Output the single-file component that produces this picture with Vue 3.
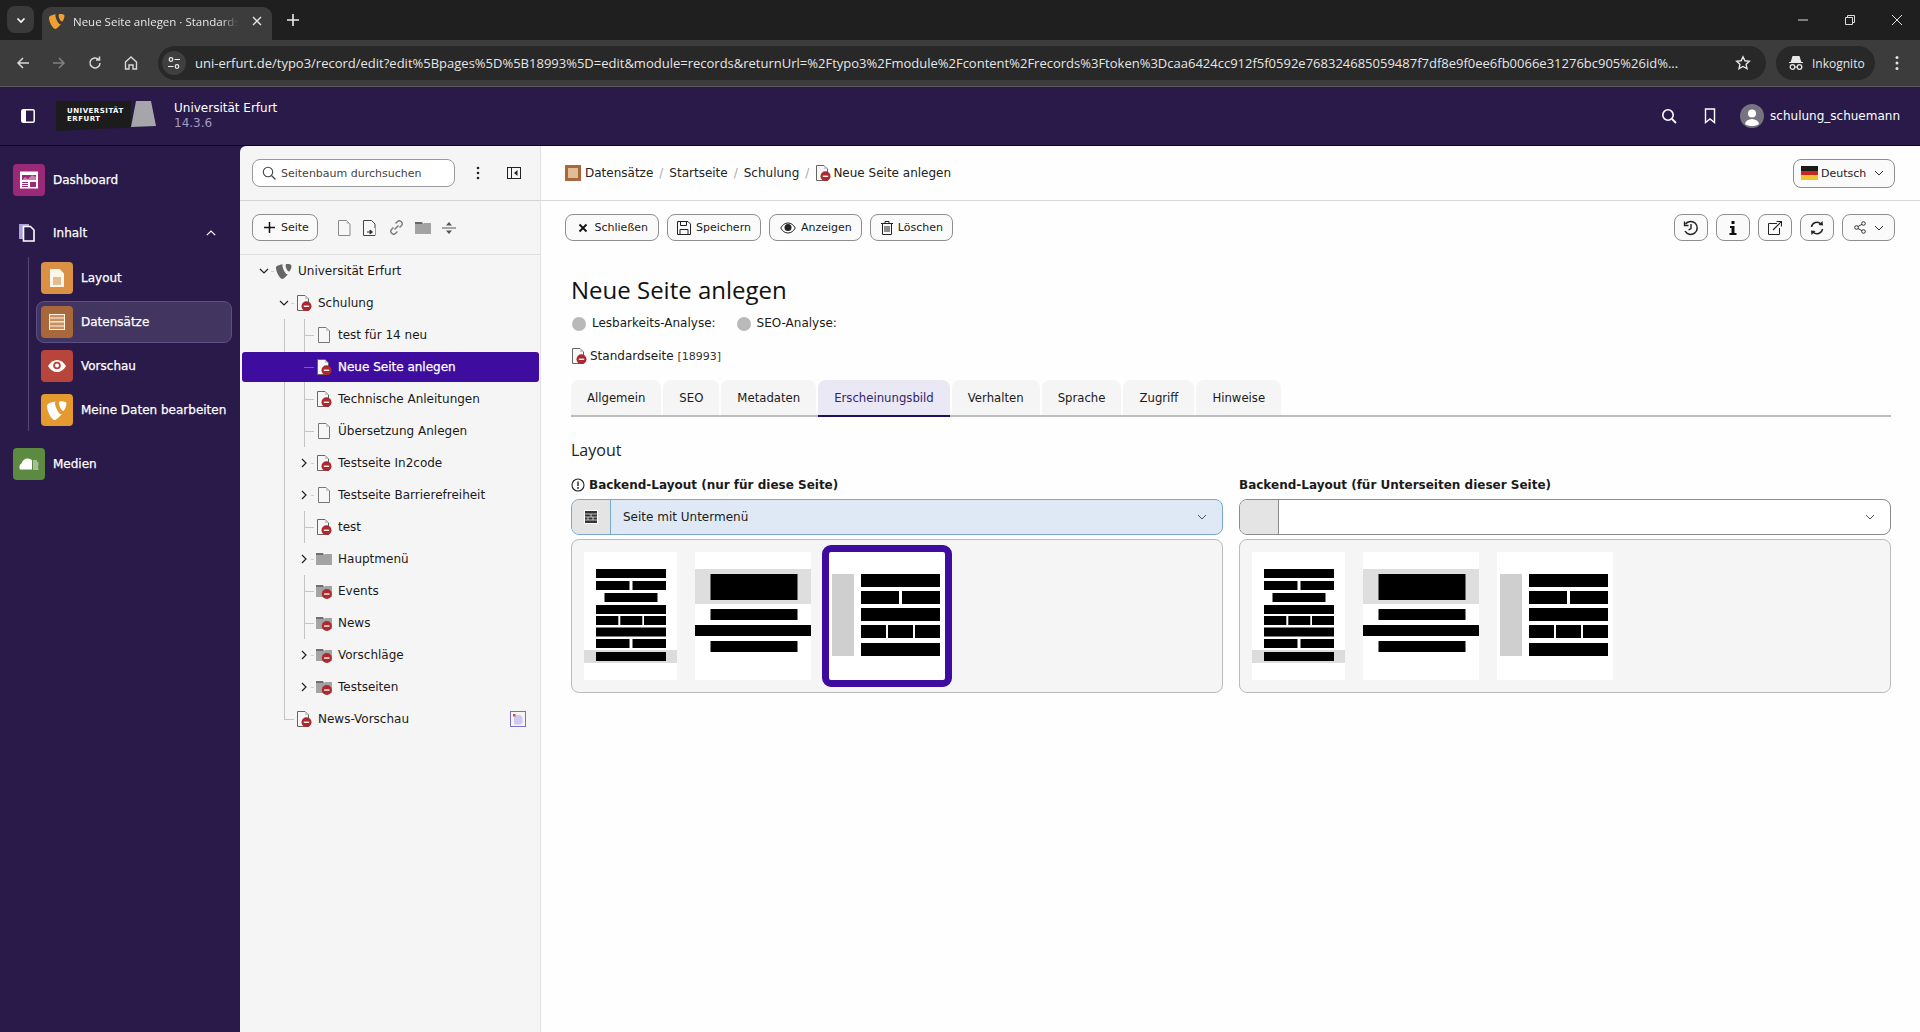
<script setup>
const url = 'uni-erfurt.de/typo3/record/edit?edit%5Bpages%5D%5B18993%5D=edit&module=records&returnUrl=%2Ftypo3%2Fmodule%2Fcontent%2Frecords%3Ftoken%3Dcaa6424cc912f5f0592e768324685059487f7df8e9f0ee6fb0066e31276bc905%26id%...'

const tree = [
  { label: 'Universität Erfurt', level: 0, icon: 'i-typo3', chev: 'down' },
  { label: 'Schulung', level: 1, icon: 'i-page-off', chev: 'down' },
  { label: 'test für 14 neu', level: 2, icon: 'i-page', link: true },
  { label: 'Neue Seite anlegen', level: 2, icon: 'i-page-off', link: true, selected: true },
  { label: 'Technische Anleitungen', level: 2, icon: 'i-page-off', link: true },
  { label: 'Übersetzung Anlegen', level: 2, icon: 'i-page', link: true },
  { label: 'Testseite In2code', level: 2, icon: 'i-page-off', chev: 'right' },
  { label: 'Testseite Barrierefreiheit', level: 2, icon: 'i-page', chev: 'right' },
  { label: 'test', level: 2, icon: 'i-page-off', link: true },
  { label: 'Hauptmenü', level: 2, icon: 'i-folder', chev: 'right' },
  { label: 'Events', level: 2, icon: 'i-folder-off', link: true },
  { label: 'News', level: 2, icon: 'i-folder-off', link: true },
  { label: 'Vorschläge', level: 2, icon: 'i-folder-off', chev: 'right' },
  { label: 'Testseiten', level: 2, icon: 'i-folder-off', chev: 'right' },
  { label: 'News-Vorschau', level: 1, icon: 'i-page-off', link: true, badge: true }
]

const thumbs = [
  {
    w: 93,
    fill: '#dcdcdc',
    grey: [[0, 98, 93, 13]],
    bars: [
      [12, 17, 70, 9], [12, 29, 33.5, 9], [48.5, 29, 33.5, 9], [20.5, 41, 53, 9], [12, 53, 70, 9],
      [12, 64, 22.3, 9], [36.3, 64, 22, 9], [60, 64, 22, 9], [12, 75.5, 70, 9],
      [12, 87, 33.5, 9], [48.5, 87, 33.5, 9], [12, 100, 70, 9]
    ]
  },
  {
    w: 116,
    fill: '#dedede',
    grey: [[0, 17, 116, 35]],
    bars: [[15.5, 22, 87, 26], [15.5, 57, 87, 11], [0, 73, 116, 11], [15.5, 89, 87, 11]]
  },
  {
    w: 116,
    fill: '#cfcfcf',
    grey: [[3, 22, 22, 82]],
    bars: [
      [32, 22, 79, 13], [32, 39, 38, 13], [73, 39, 38, 13], [32, 56, 79, 13],
      [32, 73, 25, 13], [59, 73, 25, 13], [86, 73, 25, 13], [32, 91, 79, 13]
    ]
  }
]

const columns = [
  { label: 'Backend-Layout (nur für diese Seite)', info: true, value: 'Seite mit Untermenü', active: true, selected: 2 },
  { label: 'Backend-Layout (für Unterseiten dieser Seite)', info: false, value: '', active: false, selected: -1 }
]

const tabs = ['Allgemein', 'SEO', 'Metadaten', 'Erscheinungsbild', 'Verhalten', 'Sprache', 'Zugriff', 'Hinweise']
</script>

<template>
  <div class="app">
    <svg class="sprite" aria-hidden="true">
      <symbol id="i-typo3" viewBox="0 0 16 16"><path fill="currentColor" d="M11.9 11.2c-.2.1-.5.1-.7.1-2 0-4.8-6.6-4.8-8.8 0-.8.2-1.1.5-1.3C4.5 1.5 1.2 2.4.2 3.7 0 4 0 4.500 0 5.100c0 3.400 3.600 10.900 6.200 10.900 1.200 0 3.200-2 5.700-4.800zM10.700 1c2.400 0 4.800.4 4.800 1.700 0 2.700-1.700 5.900-2.600 5.900-1.500 0-3.300-4-3.300-6C9.600 1.700 10 1 10.700 1z"/></symbol>
      <symbol id="i-page" viewBox="0 0 16 16"><path fill="#f7f7f7" stroke="#777" d="M2.500.5h7.500l3.500 3.500v11.500h-11z"/><path fill="#ccc" d="M10 .8 13.200 4H10z"/></symbol>
      <symbol id="i-page-off" viewBox="0 0 16 16"><path fill="#f7f7f7" stroke="#666" d="M1.500.5h7.500l3.500 3.500v11.500h-11z"/><path fill="#ccc" d="M9 .8 12.200 4H9z"/><circle cx="10.500" cy="11.200" r="5" fill="#a92a2f"/><rect x="7.800" y="10.600" width="5.400" height="1.300" fill="#fff"/></symbol>
      <symbol id="i-folder" viewBox="0 0 16 16"><path fill="#6f6f6f" d="M0 2h7l1 2H0z"/><path fill="#a3a3a3" d="M0 4h8l1-1h7v11H0z"/></symbol>
      <symbol id="i-folder-off" viewBox="0 0 16 16"><path fill="#6f6f6f" d="M0 2h7l1 2H0z"/><path fill="#a3a3a3" d="M0 4h8l1-1h7v11H0z"/><circle cx="10.800" cy="11" r="5" fill="#a92a2f"/><rect x="8.100" y="10.400" width="5.400" height="1.300" fill="#fff"/></symbol>
    </svg>

    <header class="tabstrip">
      <div class="tablist">
        <svg width="12" height="12" viewBox="0 0 12 12"><path d="M2.500 4.500 6 8l3.500-3.500" fill="none" stroke="#fff" stroke-width="1.600"/></svg>
      </div>
      <div class="tab">
        <svg class="tab-fav" width="16" height="16" style="color:#f0a030"><use href="#i-typo3" /></svg>
        <span class="tab-title">Neue Seite anlegen · Standardseite</span>
        <svg class="tab-close" width="10" height="10" viewBox="0 0 10 10"><path d="M1 1l8 8M9 1l-8 8" stroke="#e6e6e6" stroke-width="1.400"/></svg>
      </div>
      <svg class="tab-new" width="12" height="12" viewBox="0 0 12 12"><path d="M6 0v12M0 6h12" stroke="#ededed" stroke-width="1.600"/></svg>
      <div class="winctl">
        <svg width="12" height="12" viewBox="0 0 12 12"><path d="M1 6h10" stroke="#ddd"/></svg>
        <svg width="12" height="12" viewBox="0 0 12 12"><path d="M1.500 3.500h7v7h-7zM3.500 3.500v-2h7v7h-2" fill="none" stroke="#ddd"/></svg>
        <svg width="12" height="12" viewBox="0 0 12 12"><path d="M1 1l10 10M11 1 1 11" stroke="#ddd"/></svg>
      </div>
    </header>

    <div class="toolbar">
      <div class="nav">
        <svg width="16" height="16" viewBox="0 0 16 16"><path d="M14 8H3M8 3 3 8l5 5" fill="none" stroke="#d8d8d8" stroke-width="1.500"/></svg>
        <svg width="16" height="16" viewBox="0 0 16 16"><path d="M2 8h11M8 3l5 5-5 5" fill="none" stroke="#808080" stroke-width="1.500"/></svg>
        <svg width="16" height="16" viewBox="0 0 16 16"><path d="M13 8a5 5 0 1 1-1.500-3.600M12.500 1.500v3.500H9" fill="none" stroke="#d8d8d8" stroke-width="1.500"/></svg>
        <svg width="16" height="16" viewBox="0 0 16 16"><path d="M2.500 7 8 2l5.500 5v7h-3.500v-4H6v4H2.500z" fill="none" stroke="#d8d8d8" stroke-width="1.400"/></svg>
      </div>
      <div class="urlbar">
        <span class="siteinfo">
          <svg width="14" height="14" viewBox="0 0 14 14"><circle cx="4" cy="3.500" r="1.800" fill="none" stroke="#eee" stroke-width="1.200"/><path d="M7.500 3.500H13M1 10.500h5.500" stroke="#eee" stroke-width="1.200"/><circle cx="10" cy="10.500" r="1.800" fill="none" stroke="#eee" stroke-width="1.200"/></svg>
        </span>
        <span class="url">{{ url }}</span>
        <svg class="star" width="16" height="16" viewBox="0 0 16 16"><path d="m8 1.800 1.900 4 4.400.5-3.200 3 .9 4.400L8 11.500l-4 2.200.9-4.400-3.200-3 4.400-.5z" fill="none" stroke="#e6e6e6" stroke-width="1.400"/></svg>
      </div>
      <div class="incog">
        <svg width="16" height="16" viewBox="0 0 16 16"><path d="M3.500 6.500 5 1.500h6l1.500 5zM1 7.500h14" fill="#e6e6e6" stroke="#e6e6e6" stroke-width="1.200"/><circle cx="4.500" cy="12" r="2.300" fill="none" stroke="#e6e6e6" stroke-width="1.300"/><circle cx="11.500" cy="12" r="2.300" fill="none" stroke="#e6e6e6" stroke-width="1.300"/><path d="M6.800 12h2.400" stroke="#e6e6e6"/></svg>
        <span>Inkognito</span>
      </div>
      <svg class="kebab" width="4" height="16" viewBox="0 0 4 16"><circle cx="2" cy="2.500" r="1.500" fill="#e6e6e6"/><circle cx="2" cy="8" r="1.500" fill="#e6e6e6"/><circle cx="2" cy="13.500" r="1.500" fill="#e6e6e6"/></svg>
    </div>

    <div class="topbar">
      <svg class="toggle" width="14" height="14" viewBox="0 0 14 14"><rect x=".8" y=".8" width="12.400" height="12.400" rx="1.500" fill="none" stroke="#fff" stroke-width="1.500"/><rect x="1" y="1" width="4" height="12" fill="#fff"/></svg>
      <div class="logo">
        <div class="logo-mark"><span>UNIVERSITÄT</span><span>ERFURT</span></div>
        <svg class="logo-shape" width="25" height="26" viewBox="0 0 25 26"><path d="M5 0h15l5 25-25 1z" fill="#a5a5aa"/></svg>
      </div>
      <div class="site">
        <div class="site-name">Universität Erfurt</div>
        <div class="site-ver">14.3.6</div>
      </div>
      <div class="top-right">
        <svg width="16" height="16" viewBox="0 0 16 16"><circle cx="7" cy="7" r="5.200" fill="none" stroke="#fff" stroke-width="1.600"/><path d="m11 11 4 4" stroke="#fff" stroke-width="1.800"/></svg>
        <svg class="bookmark" width="12" height="16" viewBox="0 0 12 16"><path d="M1.500 1h9v13.500L6 11l-4.500 3.500z" fill="none" stroke="#fff" stroke-width="1.400"/></svg>
        <span class="avatar">
          <svg width="24" height="24" viewBox="0 0 24 24"><circle cx="12" cy="12" r="12" fill="#77737f"/><circle cx="12" cy="9.500" r="4" fill="#fff"/><path d="M5 20c1-4 4-4.500 7-5 3 .5 6 1 7 5-2 1.500-4.500 2-7 2s-5-.5-7-2z" fill="#fff"/></svg>
        </span>
        <span class="user">schulung_schuemann</span>
      </div>
    </div>

    <div class="main">
      <nav class="sidebar">
        <div class="mod top">
          <span class="mod-icon dash">
            <svg width="20" height="20" viewBox="0 0 20 20"><rect x="1" y="1.500" width="18" height="17" fill="#fff"/><rect x="3" y="5" width="14" height="5" fill="#9a2a78"/><path d="M3 10l3-3 3 2 4-4 4 2v3z" fill="#c77fb0"/><path d="M3 12.500h6M3 14.500h6M3 16.500h6" stroke="#9a2a78"/><rect x="11" y="12" width="6" height="5" fill="#9a2a78"/></svg>
          </span>
          <span class="mod-label">Dashboard</span>
        </div>
        <div class="group-head">
          <svg width="20" height="20" viewBox="0 0 20 20"><path d="M1 1h10v15H1z" fill="#a9a0e0"/><path d="M5.500 3.500h7l3.500 3.500v11H5.500z" fill="#291a4a" stroke="#fff" stroke-width="1.600"/></svg>
          <span class="mod-label">Inhalt</span>
          <svg class="group-chev" width="10" height="6" viewBox="0 0 10 6"><path d="M.8 5.200 5 1l4.200 4.200" fill="none" stroke="#fff" stroke-width="1.200"/></svg>
        </div>
        <div class="group">
          <div class="mod sub">
            <span class="mod-icon layout">
              <svg width="16" height="20" viewBox="0 0 16 20"><path d="M1 1h9.500L15 5.500V19H1z" fill="#fdf6ea"/><path d="M4 10h8M4 12h8M4 14h8M4 16h8" stroke="#c98434" stroke-width="1.100"/></svg>
            </span>
            <span class="mod-label">Layout</span>
          </div>
          <div class="mod sub active">
            <span class="mod-icon records">
              <svg width="16" height="16" viewBox="0 0 16 16"><rect x=".5" y=".5" width="15" height="15" fill="#c98f60" stroke="#fff3e3"/><path d="M0 4h16M0 7.900h16M0 12h16" stroke="#fff3e3" stroke-width="1.100"/></svg>
            </span>
            <span class="mod-label">Datensätze</span>
          </div>
          <div class="mod sub">
            <span class="mod-icon view">
              <svg width="20" height="14" viewBox="0 0 20 14"><path d="M1 7c2.500-4 5.500-6 9-6s6.500 2 9 6c-2.500 4-5.500 6-9 6S3.500 11 1 7z" fill="#fff"/><circle cx="10" cy="6.500" r="3.800" fill="#b8453c"/><circle cx="10" cy="6.500" r="2" fill="#fff"/></svg>
            </span>
            <span class="mod-label">Vorschau</span>
          </div>
          <div class="mod sub">
            <span class="mod-icon mine">
              <svg width="20" height="20" style="color:#fff"><use href="#i-typo3" /></svg>
            </span>
            <span class="mod-label">Meine Daten bearbeiten</span>
          </div>
        </div>
        <div class="mod media">
          <span class="mod-icon medien">
            <svg width="20" height="12" viewBox="0 0 20 12"><path d="M1 11.500c-1.200-2.500-.5-5 1.500-6C3.500 2 6 .5 8.500.5s4 1 4.500 2v9z" fill="#fff"/><path d="M14 3h4M14 5h5.500M14 7h5.500M14 9h5M14 11h5.500" stroke="#fff" stroke-width=".9"/></svg>
          </span>
          <span class="mod-label">Medien</span>
        </div>
      </nav>

      <aside class="treepane">
        <div class="tree-search">
          <div class="searchbox">
            <svg width="14" height="14" viewBox="0 0 14 14"><circle cx="6" cy="6" r="4.700" fill="none" stroke="#444" stroke-width="1.100"/><path d="m9.500 9.500 4 4" stroke="#444" stroke-width="1.200"/></svg>
            <span>Seitenbaum durchsuchen</span>
          </div>
          <svg class="tree-dots" width="4" height="14" viewBox="0 0 4 14"><circle cx="2" cy="2" r="1.300" fill="#222"/><circle cx="2" cy="7" r="1.300" fill="#222"/><circle cx="2" cy="12" r="1.300" fill="#222"/></svg>
          <svg class="tree-collapse" width="14" height="12" viewBox="0 0 14 12"><rect x=".5" y=".5" width="13" height="11" fill="none" stroke="#222"/><path d="M4.500 0v12" stroke="#222"/><path d="M10.500 3v6L7 6z" fill="#222"/></svg>
        </div>
        <div class="tree-tools">
          <button class="btn seite">
            <svg width="11" height="11" viewBox="0 0 11 11"><path d="M5.500 0v11M0 5.500h11" stroke="#111" stroke-width="1.500"/></svg>
            <span>Seite</span>
          </button>
          <div class="tool-icons">
            <svg width="14" height="16" viewBox="0 0 14 16"><path d="M1.500.5h8l3.500 3.500v11.500h-11.500z" fill="#f7f7f7" stroke="#8a8a8a"/><path d="M9.500.8 12.800 4H9.500z" fill="#ccc"/></svg>
            <svg width="16" height="16" viewBox="0 0 16 16"><path d="M1.500.5h8l3.500 3.500v11.500h-11.500z" fill="#f7f7f7" stroke="#444"/><rect x="7" y="8" width="6" height="7" fill="#f7f7f7"/><path d="M5 12h5M8 10l2.500 2L8 14z" fill="#333" stroke="#333"/></svg>
            <svg width="15" height="15" viewBox="0 0 15 15"><path d="M5.500 9.500l4-4M6.500 3.500l1.800-1.800a2.800 2.800 0 0 1 4 4L10.500 7.500M8.500 11.500l-1.800 1.800a2.800 2.800 0 0 1-4-4L4.500 7.500" fill="none" stroke="#7a7a7a" stroke-width="1.400"/></svg>
            <svg width="16" height="14" viewBox="0 0 16 14"><path d="M0 1h7l1 2H0z" fill="#666"/><path d="M0 3h8l1-1h7v11H0z" fill="#a3a3a3"/></svg>
            <svg width="14" height="12" viewBox="0 0 14 12"><path d="M0 6h14" stroke="#555"/><path d="M7 0l3 3.500H4zM7 12l3-3.500H4z" fill="#555"/></svg>
          </div>
        </div>
        <div class="tree">
          <span class="vline l0"></span>
          <span class="vline l1"></span>
          <span class="vline l2"></span>
          <div v-for="n in tree" :key="n.label" class="node" :class="['lv' + n.level, { sel: n.selected }]">
            <span v-if="n.link" class="hline"></span>
            <span v-if="n.chev" class="stub"></span>
            <span v-if="n.chev" class="chev">
              <svg v-if="n.chev === 'down'" width="10" height="8" viewBox="0 0 10 8"><path d="M1 2l4 4 4-4" fill="none" stroke="#222" stroke-width="1.200"/></svg>
              <svg v-else width="8" height="10" viewBox="0 0 8 10"><path d="M2 1l4 4-4 4" fill="none" stroke="#222" stroke-width="1.200"/></svg>
            </span>
            <svg class="node-icon" width="16" height="16" :class="{ grey: n.icon === 'i-typo3' }"><use :href="'#' + n.icon" /></svg>
            <span class="node-label">{{ n.label }}</span>
            <svg v-if="n.badge" class="node-badge" width="16" height="16" viewBox="0 0 16 16"><rect x=".5" y=".5" width="15" height="15" fill="#f5f5f5" stroke="#7a6fc4"/><path d="M4 4h6l2.500 2v6l-2 1.500H4z" fill="#cfc9ef"/><rect x="3" y="3" width="2.500" height="2.500" fill="#d9503f"/></svg>
          </div>
        </div>
      </aside>

      <section class="content">
        <div class="crumbs">
          <span class="crumb-ico"></span>
          <span>Datensätze</span><i>/</i>
          <span>Startseite</span><i>/</i>
          <span>Schulung</span><i>/</i>
          <svg width="16" height="16"><use href="#i-page-off" /></svg>
          <span class="crumb-last">Neue Seite anlegen</span>
          <button class="btn lang">
            <svg width="17" height="14" viewBox="0 0 17 14"><rect width="17" height="5" fill="#1a1a1a"/><rect y="5" width="17" height="4" fill="#c9281e"/><rect y="9" width="17" height="5" fill="#f1c232"/></svg>
            <span>Deutsch</span>
            <svg class="mini-chev" width="10" height="6" viewBox="0 0 10 6"><path d="M1 1l4 4 4-4" fill="none" stroke="#333"/></svg>
          </button>
        </div>

        <div class="docbar">
          <button class="btn">
            <svg width="14" height="14" viewBox="0 0 14 14"><path d="m3.500 3.500 7 7M10.500 3.500l-7 7" stroke="#111" stroke-width="1.800"/></svg>
            <span>Schließen</span>
          </button>
          <button class="btn">
            <svg width="14" height="14" viewBox="0 0 14 14"><path d="M.5.500h10.500l2.500 2.500v10.500H.500z" fill="none" stroke="#222"/><path d="M3.500.5v4h6v-4M3 13.500v-5h8v5" fill="none" stroke="#222"/></svg>
            <span>Speichern</span>
          </button>
          <button class="btn">
            <svg width="16" height="12" viewBox="0 0 16 12"><path d="M.7 6C2.500 2.800 5 1 8 1s5.500 1.800 7.300 5C13.500 9.200 11 11 8 11S2.500 9.200.7 6z" fill="#fff" stroke="#222"/><circle cx="8" cy="5.500" r="3.500" fill="#222"/></svg>
            <span>Anzeigen</span>
          </button>
          <button class="btn">
            <svg width="12" height="14" viewBox="0 0 12 14"><path d="M0 2.500h12M4 2.500V.5h4v2M1.500 2.500v11h9v-11M4 5v6M6 5v6M8 5v6" fill="none" stroke="#222"/></svg>
            <span>Löschen</span>
          </button>
          <div class="doc-right">
            <button class="btn square">
              <svg width="16" height="16" viewBox="0 0 16 16"><path d="M2.500 4A6.500 6.500 0 1 1 2 11" fill="none" stroke="#222" stroke-width="1.500"/><path d="M1.500 1.500V5.500H5.500" fill="none" stroke="#222" stroke-width="1.400"/><path d="M8 4v4.500l-2.500 1.500" fill="none" stroke="#222" stroke-width="1.400"/></svg>
            </button>
            <button class="btn square">
              <svg width="10" height="14" viewBox="0 0 10 14"><rect x="3.500" y="0" width="3" height="3" fill="#111"/><path d="M2 5h4.500v7H8.500v2h-7v-2h2V7H2z" fill="#111"/></svg>
            </button>
            <button class="btn square">
              <svg width="14" height="14" viewBox="0 0 14 14"><path d="M9 2.500H.5v11h11V7" fill="none" stroke="#222"/><path d="M5 9 13 1M8.500.5H13.500V5.500" fill="none" stroke="#222" stroke-width="1.200"/></svg>
            </button>
            <button class="btn square">
              <svg width="16" height="16" viewBox="0 0 16 16"><path d="M2.500 7a5.500 5.500 0 0 1 9.500-3M13.500 9a5.500 5.500 0 0 1-9.500 3" fill="none" stroke="#222" stroke-width="1.500"/><path d="m9.500 5 4.500.5-.500-4.500zM6.500 11 2 10.500l.5 4.500z" fill="#222"/></svg>
            </button>
            <button class="btn share">
              <svg width="12" height="13" viewBox="0 0 12 13"><circle cx="2.500" cy="6.500" r="1.800" fill="none" stroke="#333"/><circle cx="9.500" cy="2.500" r="1.800" fill="none" stroke="#333"/><circle cx="9.500" cy="10.500" r="1.800" fill="none" stroke="#333"/><path d="M4 5.500 8 3.300M4 7.500l4 2.200" stroke="#333"/></svg>
              <svg class="mini-chev" width="10" height="6" viewBox="0 0 10 6"><path d="M1 1l4 4 4-4" fill="none" stroke="#333"/></svg>
            </button>
          </div>
        </div>

        <div class="form">
          <h1>Neue Seite anlegen</h1>
          <div class="analysis">
            <span class="dot"></span><span class="an-label">Lesbarkeits-Analyse:</span>
            <span class="dot second"></span><span class="an-label">SEO-Analyse:</span>
          </div>
          <div class="rectype">
            <svg width="16" height="16"><use href="#i-page-off" /></svg>
            <span>Standardseite <small>[18993]</small></span>
          </div>

          <div class="tabs">
            <div v-for="t in tabs" :key="t" class="ftab" :class="{ on: t === 'Erscheinungsbild' }">{{ t }}</div>
          </div>

          <h2>Layout</h2>

          <div class="cols">
            <div v-for="c in columns" :key="c.label" class="col">
              <label class="flabel">
                <svg v-if="c.info" width="14" height="14" viewBox="0 0 14 14"><circle cx="7" cy="7" r="6" fill="none" stroke="#222" stroke-width="1.100"/><path d="M7 3.500v4.500" stroke="#222" stroke-width="1.400"/><circle cx="7" cy="10" r=".9" fill="#222"/></svg>
                <span>{{ c.label }}</span>
              </label>
              <div class="select" :class="{ changed: c.active }">
                <span class="addon">
                  <svg v-if="c.active" width="14" height="14" viewBox="0 0 14 14"><rect width="14" height="14" fill="#fff"/><rect x="1" y="1" width="12" height="12" fill="#333"/><path d="M1 4h12M1 7h12M1 10h12M7 4v3M4 7v3M9 7v3" stroke="#fff" stroke-width=".7"/></svg>
                </span>
                <span class="value">{{ c.value }}</span>
                <svg class="sel-chev" width="10" height="6" viewBox="0 0 10 6"><path d="M1 1l4 4 4-4" fill="none" stroke="#555"/></svg>
              </div>
              <div class="picker">
                <div v-for="(t, i) in thumbs" :key="i" class="thumb" :class="{ picked: c.selected === i }">
                  <svg :width="t.w" height="128" :viewBox="'0 0 ' + t.w + ' 128'">
                    <rect v-for="(r, k) in t.grey" :key="k" :x="r[0]" :y="r[1]" :width="r[2]" :height="r[3]" :fill="t.fill" />
                    <rect v-for="(r, k) in t.bars" :key="'b' + k" :x="r[0]" :y="r[1]" :width="r[2]" :height="r[3]" fill="#000" />
                  </svg>
                </div>
              </div>
            </div>
          </div>
        </div>
      </section>
    </div>
  </div>
</template>

<style scoped>
.app { width: 1920px; height: 1032px; overflow: hidden; display: flex; flex-direction: column; font-family: "DejaVu Sans", sans-serif; font-size: 12px; color: #1a1a1a; background: #fff; }
.sprite { position: absolute; width: 0; height: 0; }
svg { display: block; flex: none; }
button { font: inherit; color: inherit; }

.tabstrip { height: 40px; background: #1f1f1f; display: flex; align-items: flex-end; font-family: "Open Sans", sans-serif; flex: none; }
.tablist { width: 27px; height: 27px; margin: 0 8px 7px 7px; border-radius: 8px; background: #3a3a3a; display: flex; align-items: center; justify-content: center; }
.tab { width: 230px; height: 33px; background: #3c3c3c; border-radius: 9px 9px 0 0; display: flex; align-items: center; padding: 0 10px 5px 7px; box-sizing: border-box; color: #e6e6e6; font-size: 11.500px; }
.tab-title { margin-left: 8px; width: 165px; overflow: hidden; white-space: nowrap; -webkit-mask-image: linear-gradient(90deg, #000 90%, transparent); mask-image: linear-gradient(90deg, #000 90%, transparent); }
.tab-close { margin-left: 14px; }
.tab-new { margin: 0 0 14px 15px; }
.winctl { margin-left: auto; display: flex; gap: 35px; padding: 0 17px 14px 0; }

.toolbar { height: 46px; box-sizing: content-box; background: #3c3c3c; border-bottom: 1px solid #5a5a5a; display: flex; align-items: center; font-family: "Open Sans", sans-serif; flex: none; }
.nav { width: 158px; display: flex; gap: 20px; padding-left: 15px; box-sizing: border-box; }
.urlbar { width: 1608px; height: 34px; background: #282828; border-radius: 17px; display: flex; align-items: center; color: #e6e6e6; }
.siteinfo { width: 24px; height: 24px; margin-left: 4px; border-radius: 50%; background: #3f3f3f; display: flex; align-items: center; justify-content: center; flex: none; }
.url { margin-left: 9px; width: 1530px; font-size: 13px; white-space: nowrap; overflow: hidden; flex: none; }
.star { margin-left: 10px; }
.incog { margin-left: 10px; width: 99px; height: 34px; background: #282828; border-radius: 17px; display: flex; align-items: center; gap: 8px; padding-left: 12px; box-sizing: border-box; color: #e6e6e6; font-size: 12px; }
.kebab { margin-left: 20px; }

.topbar { height: 58px; background: #291a4a; border-bottom: 1px solid #0d0820; display: flex; align-items: center; color: #fff; flex: none; }
.toggle { margin-left: 21px; }
.logo { margin-left: 21px; width: 100px; height: 30px; display: flex; align-items: flex-start; }
.logo-mark { width: 76px; height: 30px; background: #1c1c1c; display: flex; flex-direction: column; justify-content: center; padding-left: 11px; box-sizing: border-box; font-size: 7px; font-weight: 700; line-height: 8px; padding-bottom: 3px; clip-path: polygon(0 0, 100% 0, 100% 88%, 0 100%); letter-spacing: .5px; }
.site { margin-left: 18px; line-height: 15px; }
.site-ver { color: #a29cc0; }
.top-right { margin-left: auto; display: flex; align-items: center; padding-right: 20px; }
.bookmark { margin-left: 27px; }
.avatar { margin-left: 24px; }
.user { margin-left: 6px; }

.main { flex: 1; display: flex; min-height: 0; background: #291a4a; }
.sidebar { width: 240px; flex: none; color: #fff; display: flex; flex-direction: column; padding: 18px 8px 0 13px; box-sizing: border-box; }
.mod { display: flex; align-items: center; height: 32px; }
.mod-icon { width: 32px; height: 32px; border-radius: 4px; display: flex; align-items: center; justify-content: center; flex: none; }
.mod-label { margin-left: 8px; -webkit-text-stroke: .25px #fff; white-space: nowrap; }
.dash { background: #9a2a78; }
.layout { background: #da9146; }
.records { background: #a8683c; }
.view { background: #b8453c; }
.mine { background: #e49a2f; }
.medien { background: #5c8a40; }
.group-head { display: flex; align-items: center; height: 32px; margin-top: 21px; padding-left: 5px; }
.group-head .mod-label { margin-left: 15px; }
.group-chev { margin-left: auto; margin-right: 16px; }
.group { margin: 8px 0 0 15px; border-left: 1px solid #54477a; padding: 5px 0 5px 0; display: flex; flex-direction: column; gap: 12px; }
.sub { margin-left: 12px; }
.sub.active { position: relative; }
.sub.active::before { content: ""; position: absolute; left: -5px; right: 0; top: -5px; bottom: -5px; border: 1px solid #5c5088; border-radius: 8px; background: #423560; }
.sub.active > * { position: relative; }
.media { margin-top: 17px; }

.treepane { width: 301px; flex: none; background: #f5f5f5; border-right: 1px solid #e2e2e2; box-sizing: border-box; border-top-left-radius: 6px; display: flex; flex-direction: column; }
.tree-search { height: 54px; border-bottom: 1px solid #d4d4d4; display: flex; align-items: center; padding-left: 12px; flex: none; }
.searchbox { width: 203px; height: 28px; border: 1px solid #999; border-radius: 8px; background: #fff; box-sizing: border-box; display: flex; align-items: center; gap: 5px; padding-left: 9px; color: #444; font-size: 11px; }
.tree-dots { margin-left: 21px; }
.tree-collapse { margin-left: 27px; }
.tree-tools { height: 53px; border-bottom: 1px solid #e0e0e0; display: flex; align-items: center; padding-left: 12px; flex: none; }
.btn { height: 27px; border: 1px solid #8e8e8e; border-radius: 8px; background: #fafafa; box-sizing: border-box; display: flex; align-items: center; gap: 5px; padding: 0 9px; font-size: 11px; white-space: nowrap; }
.seite { width: 66px; gap: 6px; padding: 0 0 0 11px; }
.tool-icons { display: flex; align-items: center; gap: 11px; margin-left: 19px; }

.tree { position: relative; color: #1a1a1a; }
.vline { position: absolute; width: 1px; background: #c4c4c4; }
.vline.l0 { left: 24px; top: 2px; height: 6px; }
.vline.l1 { left: 44px; top: 33px; height: 431px; }
.vline.l2 { left: 64px; top: 64px; height: 355px; }
.node { height: 32px; display: flex; align-items: center; gap: 6px; position: relative; }
.lv0 { padding-left: 36px; }
.lv1 { padding-left: 56px; }
.lv2 { padding-left: 76px; }
.node-icon { position: relative; }
.node-icon.grey { color: #666; }
.node-label { position: relative; white-space: nowrap; }
.sel::before { content: ""; position: absolute; left: 2px; right: 1px; top: 1px; bottom: 1px; background: #3e0c9e; border-radius: 3px; }
.sel .node-label { color: #fff; -webkit-text-stroke: .25px #fff; }
.hline { position: absolute; height: 1px; top: 16px; width: 10px; background: #c4c4c4; }
.stub { position: absolute; height: 1px; top: 16px; width: 4px; background: #d0d0d0; }
.lv1 .hline { left: 44px; }
.lv2 .hline { left: 64px; }
.lv0 .stub { left: 30px; }
.lv1 .stub { left: 50px; }
.lv2 .stub { left: 70px; }
.chev { position: absolute; top: 0; bottom: 0; width: 14px; display: flex; align-items: center; justify-content: center; background: #f5f5f5; }
.lv0 .chev { left: 17px; }
.lv1 .chev { left: 37px; }
.lv2 .chev { left: 57px; }
.node-badge { position: absolute; right: 14px; top: 8px; }
.sel .hline { background: #7e5cc8; }

.content { flex: 1; background: #fefefe; display: flex; flex-direction: column; min-width: 0; }
.crumbs { height: 54px; border-bottom: 1px solid #d8d8d8; display: flex; align-items: center; padding: 0 25px 0 24px; color: #222; flex: none; }
.crumb-ico { width: 16px; height: 16px; background: #a8683c; box-shadow: inset 0 0 0 3px #a8683c, inset 0 0 0 20px #e0bd96; margin-right: 4px; }
.crumbs i { font-style: normal; color: #aaa; margin: 0 6px; }
.crumb-last { margin-left: 2px; }
.lang { margin-left: auto; width: 102px; height: 29px; padding: 0 0 0 7px; gap: 3px; }
.mini-chev { margin-left: 5px; }
.docbar { height: 53px; display: flex; align-items: center; gap: 8px; padding: 0 25px 0 24px; flex: none; }
.docbar > .btn { padding: 0 9.500px; }
.doc-right { margin-left: auto; display: flex; gap: 8px; }
.square { width: 34px; justify-content: center; padding: 0; }
.share { width: 53px; justify-content: center; padding: 0; gap: 3px; }
.form { padding: 0 29px 0 30px; }
h1 { margin: 19px 0 0; font: 400 24px/33px "Open Sans", sans-serif; color: #111; }
.analysis { display: flex; align-items: center; height: 20px; margin-top: 7px; }
.dot { width: 14px; height: 14px; border-radius: 50%; background: #b9b9b9; margin: 1px 6px 0 1px; }
.dot.second { margin-left: 21px; }
.rectype { display: flex; align-items: center; gap: 3px; margin-top: 13px; height: 20px; }
.rectype small { font-size: 11px; color: #333; }
.tabs { display: flex; gap: 2px; margin-top: 14px; border-bottom: 2px solid #bdbdbd; height: 35px; font-size: 11.700px; }
.ftab { height: 35px; padding: 0 16px; background: #f5f5f5; border-radius: 8px 8px 0 0; display: flex; align-items: center; }
.ftab.on { background: #eae8f5; color: #33246b; border-bottom: 2px solid #1e0f60; height: 37px; box-sizing: border-box; }
h2 { margin: 21px 0 0; font: 400 16px/24px "Open Sans", sans-serif; color: #222; }
.cols { display: grid; grid-template-columns: 1fr 1fr; gap: 16px; margin-top: 13px; }
.flabel { display: flex; align-items: center; gap: 4px; height: 20px; font-weight: 700; }
.select { height: 36px; margin-top: 4px; border: 1px solid #8b8b8b; border-radius: 8px; display: flex; align-items: center; background: #fff; box-sizing: border-box; overflow: hidden; }
.select.changed { background: #dfe9f5; border-color: #7ba7c9; }
.addon { width: 38px; height: 100%; background: #e4e4e4; border-right: 1px solid #8b8b8b; display: flex; align-items: center; justify-content: center; flex: none; }
.changed .addon { border-right-color: #7ba7c9; }
.value { margin-left: 12px; }
.sel-chev { margin-left: auto; margin-right: 15px; }
.picker { margin-top: 4px; height: 154px; box-sizing: border-box; border: 1px solid #bbb; border-radius: 8px; background: #f5f5f5; display: flex; gap: 18px; padding: 12px; }
.thumb { background: #fff; height: 128px; }
.thumb.picked { outline: 7px solid #3e0c9e; border-radius: 2px; }
</style>
